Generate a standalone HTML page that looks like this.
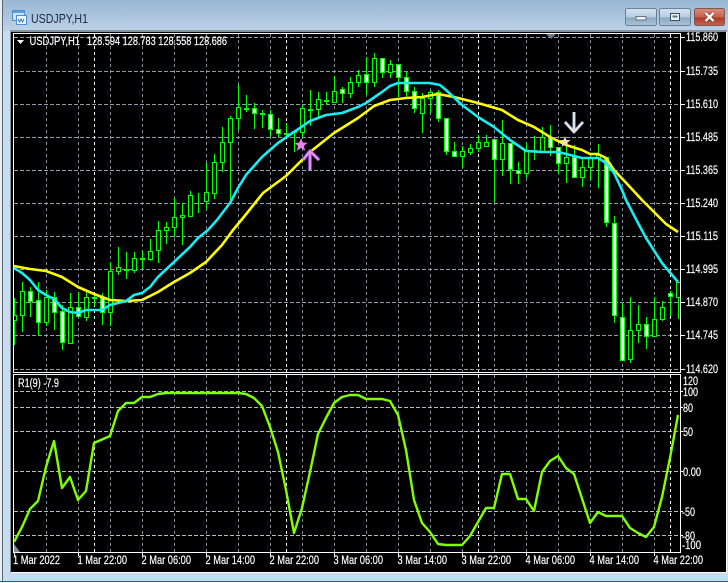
<!DOCTYPE html>
<html><head><meta charset="utf-8"><title>USDJPY,H1</title>
<style>
html,body{margin:0;padding:0;width:728px;height:583px;overflow:hidden;background:#c8dcef}
svg{display:block;position:absolute;left:0;top:0}
text{font-family:"Liberation Sans",sans-serif;font-size:11.5px;fill:#fff;stroke:#fff;stroke-width:.18}
</style></head><body>
<svg width="728" height="583" viewBox="0 0 728 583" xmlns="http://www.w3.org/2000/svg">
<defs>
<linearGradient id="tb" x1="0" y1="0" x2="0" y2="1"><stop offset="0" stop-color="#9ab6d2"/><stop offset="1" stop-color="#bcd2e8"/></linearGradient>
<linearGradient id="bt" x1="0" y1="0" x2="0" y2="1"><stop offset="0" stop-color="#d4e2f0"/><stop offset=".5" stop-color="#b8cde2"/><stop offset=".55" stop-color="#8aa8c6"/><stop offset="1" stop-color="#aac4dc"/></linearGradient>
<linearGradient id="cl" x1="0" y1="0" x2="0" y2="1"><stop offset="0" stop-color="#dc8c7c"/><stop offset=".5" stop-color="#c8604e"/><stop offset=".55" stop-color="#b03828"/><stop offset="1" stop-color="#c86450"/></linearGradient>
<clipPath id="m"><rect x="14" y="34" width="666" height="338"/></clipPath>
<clipPath id="s"><rect x="14" y="375" width="666" height="177"/></clipPath>
</defs>
<!-- window frame -->
<rect width="728" height="583" fill="#c8dcef"/>
<rect width="728" height="31" fill="url(#tb)"/>
<rect x="0" y="0" width="2" height="583" fill="#e8eef4"/>
<rect x="2" y="0" width="1" height="581" fill="#5a6672"/>
<rect x="10" y="30" width="717" height="2" fill="#8a939c"/>
<rect x="10" y="30" width="1" height="543" fill="#8a939c"/>
<rect x="11" y="32" width="715" height="540" fill="#000"/>
<rect x="11" y="572" width="716" height="1" fill="#fff"/>
<rect x="726" y="32" width="1" height="541" fill="#fff"/>
<rect x="0" y="581" width="728" height="1" fill="#1d6f80"/>
<rect x="0" y="582" width="728" height="1" fill="#f4f8fb"/>
<!-- title icon -->
<rect x="12.5" y="10.5" width="12" height="10" fill="#cfe2f6" stroke="#4d8fd6"/>
<rect x="13" y="11" width="11" height="2" fill="#5c9de0"/>
<rect x="16.5" y="15.5" width="10" height="9" fill="#eef6fd" stroke="#4d8fd6"/>
<path d="M18 19l1.5 3 1.5-3 1.500 3 1.500-3" fill="none" stroke="#3a78c0"/>
<text x="31" y="23" textLength="57" lengthAdjust="spacingAndGlyphs" style="font-size:12.5px;fill:#1a2a48;stroke:none">USDJPY,H1</text>
<!-- window buttons -->
<rect x="625.500" y="8.500" width="31" height="17" rx="2" fill="url(#bt)" stroke="#6d7f92"/>
<rect x="636" y="16.500" width="10" height="3.500" fill="#f2f5f8" stroke="#4a5a6c" stroke-width=".8"/>
<rect x="659.500" y="8.500" width="31" height="17" rx="2" fill="url(#bt)" stroke="#6d7f92"/>
<rect x="670.500" y="13.500" width="9" height="7" fill="#eef2f6" stroke="#3d4c5e"/>
<rect x="672.500" y="15.500" width="5" height="2" fill="#5a7088"/>
<rect x="694.500" y="8.500" width="30" height="17" rx="2" fill="url(#cl)" stroke="#7a5a58"/>
<path d="M705.500 13l8 8M713.500 13l-8 8" stroke="#5a2a22" stroke-width="3.600"/>
<path d="M705.500 13l8 8M713.500 13l-8 8" stroke="#fff" stroke-width="2.400"/>
<!-- grid -->
<g shape-rendering="crispEdges" fill="none" stroke-width="1">
<path stroke="#7d8d9d" stroke-dasharray="3 3" d="M46.500 34V372M78.500 34V372M110.500 34V372M142.500 34V372M174.500 34V372M206.500 34V372M238.500 34V372M270.500 34V372M302.500 34V372M334.500 34V372M366.500 34V372M398.500 34V372M430.500 34V372M462.500 34V372M494.500 34V372M526.500 34V372M558.500 34V372M590.500 34V372M622.500 34V372M654.500 34V372"/>
<path stroke="#7d8d9d" stroke-dasharray="3 3" d="M46.500 375V552M78.500 375V552M110.500 375V552M142.500 375V552M174.500 375V552M206.500 375V552M238.500 375V552M270.500 375V552M302.500 375V552M334.500 375V552M366.500 375V552M398.500 375V552M430.500 375V552M462.500 375V552M494.500 375V552M526.500 375V552M558.500 375V552M590.500 375V552M622.500 375V552M654.500 375V552"/>
<path stroke="#8f9dab" stroke-dasharray="4 2" d="M14 37.500H680M14 71.500H680M14 104.500H680M14 137.500H680M14 170.500H680M14 203.500H680M14 236.500H680M14 269.500H680M14 302.500H680M14 335.500H680M14 369.500H680"/>
<path stroke="#b4bcc4" stroke-dasharray="4 2" d="M14 391.500H680M14 407.500H680M14 431.500H680M14 471.500H680M14 511.500H680M14 535.500H680"/>
<path stroke="#fff" stroke-dasharray="3 3" d="M94.500 34V372M286.500 34V372M478.500 34V372M670.500 34V372M94.500 375V552M286.500 375V552M478.500 375V552M670.500 375V552"/>
</g>
<!-- candles -->
<g clip-path="url(#m)" shape-rendering="crispEdges">
<path fill="none" stroke="#00ff00" d="M14.500 298V345M22.500 282V332M30.500 287V317M38.500 282V336M46.500 290V326M54.500 292V330M62.500 305V350M70.500 293V344M78.500 292V317M86.500 292V321M94.500 294V306M102.500 293V325M110.500 262V326M118.500 247V275M126.500 252V279M134.500 252V273M142.500 251V269M150.500 239V261M158.500 221V263M166.500 222V244M174.500 198V237M182.500 203V245M190.500 191V216M198.500 193V213M206.500 163V209M214.500 154V199M222.500 127V172M230.500 116V203M238.500 85V130M246.500 95V112M254.500 103V129M262.500 110V128M270.500 110V137M278.500 118V137M286.500 123V138M294.500 130V152M302.500 105V137M310.500 90V126M318.500 92V117M326.500 92V105M334.500 76V102M342.500 87V103M350.500 77V98M358.500 70V87M366.500 57V95M374.500 53V87M382.500 58V78M390.500 60V78M398.500 64V97M406.500 72V97M414.500 87V113M422.500 93V133M430.500 90V113M438.500 90V122M446.500 118V155M454.500 142V157M462.500 146V168M470.500 144V155M478.500 135V152M486.500 135V147M494.500 139V202M502.500 120V176M510.500 143V184M518.500 162V184M526.500 143V178M534.500 136V160M542.500 127V152M550.500 125V156M558.500 147V174M566.500 145V183M574.500 145V178M582.500 158V187M590.500 153V180M598.500 144V188M606.500 157V227M614.500 216V323M622.500 303V361M630.500 297V363M638.500 305V343M646.500 317V349M654.500 297V336M662.500 301V321M670.500 291V316M678.500 282V319"/>
<path fill="none" stroke="#00ff00" stroke-width="2" d="M92 298h5M124 270h5M140 259h5M244 109h5M260 114h5M284 134h5M292 132h5M308 110h5M324 101h5M532 151h5"/>
<path fill="#000" stroke="#00ff00" d="M12.500 315.500h4v5h-4zM20.500 291.500h4v24h-4zM44.500 297.500h4v25h-4zM68.500 307.500h4v36h-4zM84.500 297.500h4v20h-4zM108.500 271.500h4v41h-4zM116.500 267.500h4v4h-4zM132.500 258.500h4v12h-4zM148.500 251.500h4v8h-4zM156.500 230.500h4v20h-4zM164.500 227.500h4v3h-4zM172.500 217.500h4v10h-4zM180.500 215.500h4v2h-4zM188.500 195.500h4v21h-4zM204.500 192.500h4v9h-4zM212.500 162.500h4v31h-4zM220.500 142.500h4v20h-4zM228.500 118.500h4v24h-4zM236.500 107.500h4v11h-4zM300.500 108.500h4v24h-4zM316.500 99.500h4v10h-4zM332.500 91.500h4v11h-4zM348.500 82.500h4v11h-4zM356.500 75.500h4v7h-4zM372.500 58.500h4v24h-4zM388.500 64.500h4v8h-4zM420.500 98.500h4v15h-4zM428.500 92.500h4v6h-4zM460.500 151.500h4v5h-4zM468.500 148.500h4v4h-4zM476.500 142.500h4v6h-4zM484.500 142.500h4v4h-4zM500.500 143.500h4v16h-4zM524.500 151.500h4v22h-4zM540.500 137.500h4v14h-4zM564.500 157.500h4v6h-4zM580.500 167.500h4v10h-4zM588.500 158.500h4v9h-4zM596.500 155.500h4v3h-4zM628.500 330.500h4v29h-4zM636.500 324.500h4v6h-4zM652.500 319.500h4v17h-4zM660.500 307.500h4v12h-4zM676.500 282.500h4v15h-4z"/>
<path fill="#fff" stroke="#00ff00" d="M28.500 291.500h4v10h-4zM36.500 300.500h4v22h-4zM52.500 297.500h4v15h-4zM60.500 311.500h4v31h-4zM76.500 307.500h4v9h-4zM100.500 297.500h4v15h-4zM252.500 108.500h4v5h-4zM268.500 114.500h4v15h-4zM276.500 129.500h4v4h-4zM340.500 89.500h4v4h-4zM364.500 74.500h4v8h-4zM380.500 58.500h4v14h-4zM396.500 64.500h4v13h-4zM404.500 77.500h4v14h-4zM412.500 91.500h4v17h-4zM436.500 92.500h4v26h-4zM444.500 118.500h4v33h-4zM452.500 151.500h4v5h-4zM492.500 139.500h4v20h-4zM508.500 143.500h4v26h-4zM516.500 170.500h4v3h-4zM548.500 137.500h4v10h-4zM556.500 147.500h4v16h-4zM572.500 157.500h4v20h-4zM604.500 157.500h4v65h-4zM612.500 223.500h4v92h-4zM620.500 317.500h4v43h-4zM644.500 324.500h4v12h-4zM668.500 293.500h4v3h-4z"/>
</g>
<!-- moving averages and markers -->
<g clip-path="url(#m)" fill="none" stroke-width="2.600" stroke-linejoin="round">
<polyline stroke="#ffff00" points="14,266 30,269 46,271 62,277 78,287 94,294 110,300 126,301 142,300 158,292 174,282 190,273 206,262 222,245 233,230 243,218 263,193 286,176 310,152 334,133 358,118 374,106 390,100 406,98 422,97 438,94 454,97 478,103 502,110 518,120 534,127 550,137 566,145 582,150 590,154 598,154 606,158 614,170 630,187 642,200 658,216 666,224 678,232"/>
<polyline stroke="#19ecf4" points="14,268 22,273 30,280 38,290 46,295 54,299 62,308 70,312 78,313 86,310 102,310 110,305 126,301 134,295 142,293 150,287 158,277 174,262 190,247 198,238 208,230 217,220 230,203 238,188 246,175 262,157 278,143 294,132 310,121 326,115 342,113 358,107 366,103 382,92 390,86 398,83 430,83 440,85 446,90 462,105 478,117 494,127 510,140 526,151 542,152 558,152 574,156 582,158 598,158 606,163 614,173 622,190 626,200 638,223 646,238 662,263 678,282"/>
<polygon fill="#e884e8" stroke="none" points="301,138 302.800,142.600 307.700,142.800 303.900,145.900 305.100,150.700 301,148 296.900,150.700 298.100,145.900 294.300,142.800 299.200,142.600"/>
<path stroke="#7a50e0" stroke-width="3.600" d="M303 160l7-9 9 9M310 152v18"/>
<path stroke="#f08ce8" stroke-width="2.200" d="M303 160l7-9 9 9M310 152v18"/>
<path stroke="#5a6a90" stroke-width="3.400" d="M565 122l9 10 9-10M574 112v19"/>
<path stroke="#dfe3ea" stroke-width="2.400" d="M565 122l9 10 9-10M574 112v19"/>
<polygon fill="#f2dcc0" stroke="none" points="565,136 566.500,140 570.700,140.100 567.400,142.800 568.500,146.900 565,144.500 561.500,146.900 562.600,142.800 559.300,140.100 563.500,140"/>
</g>
<!-- oscillator -->
<g clip-path="url(#s)">
<polyline fill="none" stroke="#7fff00" stroke-width="2.400" stroke-linejoin="round" points="14,542 22,527 30,509 38,501 46,467 54,441 62,488 70,477 78,500 86,491 94,443 110,436 118,411 126,403 134,403 142,397 150,397 158,394 166,393 238,393 246,394 254,398 262,406 270,427 278,452 286,490 294,533 302,508 310,472 318,434 326,418 334,403 342,397 350,395 358,395 366,399 382,399 390,401 398,415 406,450 414,500 422,523 430,532 438,544 446,545 462,545 470,536 478,522 486,508 494,508 502,474 510,474 518,499 526,499 534,511 542,472 550,461 558,456 566,468 574,474 590,523 598,512 606,516 622,516 630,528 638,533 646,537 654,527 662,497 670,458 678,415"/>
</g>
<!-- frames and ticks -->
<g shape-rendering="crispEdges" fill="none">
<path stroke="#fff" d="M13.500 33.500H680.500V372.500H13.500ZM13.500 374.500H680.500V552.500H13.500Z"/>
<path stroke="#fff" d="M681 37.500h4M681 71.500h4M681 104.500h4M681 137.500h4M681 170.500h4M681 203.500h4M681 236.500h4M681 269.500h4M681 302.500h4M681 335.500h4M681 369.500h4M681 391.500h2M681 407.500h2M681 431.500h2M681 471.500h2M681 511.500h2M681 535.500h2M14.500 553v3M78.500 553v3M142.500 553v3M206.500 553v3M270.500 553v3M334.500 553v3M398.500 553v3M462.500 553v3M526.500 553v3M590.500 553v3M654.500 553v3"/>
</g>
<polygon points="546,34 556,34 551,39" fill="#6a7a8a"/>
<polygon points="14,544 14,552 20,552" fill="#7d8d9d"/>
<polygon points="17,40 24,40 20.500,44" fill="#fff"/>
<!-- header text -->
<text x="29.500" y="45" textLength="50.500" lengthAdjust="spacingAndGlyphs">USDJPY,H1</text>
<text x="87" y="45" textLength="140" lengthAdjust="spacingAndGlyphs">128.594 128.783 128.558 128.686</text>
<text x="18" y="387" textLength="41" lengthAdjust="spacingAndGlyphs">R1(9) -7.9</text>
<!-- price labels -->
<text x="686" y="41" textLength="32" lengthAdjust="spacingAndGlyphs">115.860</text>
<text x="686" y="75" textLength="32" lengthAdjust="spacingAndGlyphs">115.735</text>
<text x="686" y="108" textLength="32" lengthAdjust="spacingAndGlyphs">115.610</text>
<text x="686" y="141" textLength="32" lengthAdjust="spacingAndGlyphs">115.485</text>
<text x="686" y="174" textLength="32" lengthAdjust="spacingAndGlyphs">115.365</text>
<text x="686" y="207" textLength="32" lengthAdjust="spacingAndGlyphs">115.240</text>
<text x="686" y="240" textLength="32" lengthAdjust="spacingAndGlyphs">115.115</text>
<text x="686" y="273" textLength="32" lengthAdjust="spacingAndGlyphs">114.995</text>
<text x="686" y="306" textLength="32" lengthAdjust="spacingAndGlyphs">114.870</text>
<text x="686" y="339" textLength="32" lengthAdjust="spacingAndGlyphs">114.745</text>
<text x="686" y="373" textLength="32" lengthAdjust="spacingAndGlyphs">114.620</text>
<!-- indicator labels -->
<text x="683" y="385" textLength="15" lengthAdjust="spacingAndGlyphs">120</text>
<text x="683" y="396" textLength="15" lengthAdjust="spacingAndGlyphs">100</text>
<text x="683" y="412" textLength="10" lengthAdjust="spacingAndGlyphs">80</text>
<text x="683" y="436" textLength="10" lengthAdjust="spacingAndGlyphs">50</text>
<text x="683" y="476" textLength="18" lengthAdjust="spacingAndGlyphs">0.00</text>
<text x="682" y="516" textLength="13" lengthAdjust="spacingAndGlyphs">-50</text>
<text x="682" y="540" textLength="13" lengthAdjust="spacingAndGlyphs">-80</text>
<text x="682" y="549" textLength="19" lengthAdjust="spacingAndGlyphs">-100</text>
<!-- time labels -->
<text x="13" y="564" textLength="47" lengthAdjust="spacingAndGlyphs">1 Mar 2022</text>
<text x="77.500" y="564" textLength="49.500" lengthAdjust="spacingAndGlyphs">1 Mar 22:00</text>
<text x="141.500" y="564" textLength="49.500" lengthAdjust="spacingAndGlyphs">2 Mar 06:00</text>
<text x="205.500" y="564" textLength="49.500" lengthAdjust="spacingAndGlyphs">2 Mar 14:00</text>
<text x="269.500" y="564" textLength="49.500" lengthAdjust="spacingAndGlyphs">2 Mar 22:00</text>
<text x="333.500" y="564" textLength="49.500" lengthAdjust="spacingAndGlyphs">3 Mar 06:00</text>
<text x="397.500" y="564" textLength="49.500" lengthAdjust="spacingAndGlyphs">3 Mar 14:00</text>
<text x="461.500" y="564" textLength="49.500" lengthAdjust="spacingAndGlyphs">3 Mar 22:00</text>
<text x="525.500" y="564" textLength="49.500" lengthAdjust="spacingAndGlyphs">4 Mar 06:00</text>
<text x="589.500" y="564" textLength="49.500" lengthAdjust="spacingAndGlyphs">4 Mar 14:00</text>
<text x="653.500" y="564" textLength="49.500" lengthAdjust="spacingAndGlyphs">4 Mar 22:00</text>
</svg>
</body></html>
